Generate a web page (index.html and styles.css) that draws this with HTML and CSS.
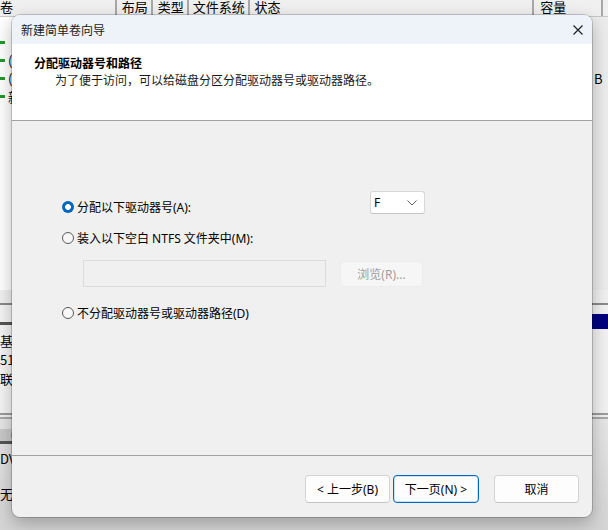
FILE: index.html
```html
<!DOCTYPE html>
<html>
<head>
<meta charset="utf-8">
<link rel="stylesheet" href="styles.css">
</head>
<body>
<div class="desk">
  <div class="hdr">
    <div class="hc c1"><span>卷</span></div>
    <div class="hc c2">布局</div>
    <div class="hc c3">类型</div>
    <div class="hc c4">文件系统</div>
    <div class="hc c5">状态</div>
    <div class="hc c6">容量</div>
    <div class="hc c7"></div>
  </div>
  <div class="list">
    <div class="lrow"><span class="gm"></span><span class="lt"></span><span class="rt"></span></div>
    <div class="lrow"><span class="gm"></span><span class="lt">(</span><span class="rt"></span></div>
    <div class="lrow"><span class="gm"></span><span class="lt">(</span><span class="rt">B</span></div>
    <div class="lrow"><span class="gm"></span><span class="lt">新</span><span class="rt"></span></div>
  </div>
  <div class="graph">
    <div class="disk d1">
      <div class="dleft">
        <div class="gbar"></div>
        <div class="dt">基本</div>
        <div class="dt">51</div>
        <div class="dt">联机</div>
      </div>
      <div class="dright"><div class="navy"></div></div>
    </div>
    <div class="disk d2">
      <div class="dleft">
        <div class="cdbar"><span class="cd"></span></div>
        <div class="gbar"></div>
        <div class="dt">DVD</div>
        <div class="dt low">无媒体</div>
      </div>
      <div class="dright"></div>
    </div>
  </div>
</div>

<div class="dialog">
  <div class="titlebar">
    <span class="ttl">新建简单卷向导</span>
    <svg class="close" width="10" height="10" viewBox="0 0 10 10"><path d="M0.5 0.5L9.5 9.5M9.5 0.5L0.5 9.5" stroke="#1a1a1a" stroke-width="1.1" fill="none"/></svg>
  </div>
  <div class="header">
    <div class="h1">分配驱动器号和路径</div>
    <div class="h2">为了便于访问，可以给磁盘分区分配驱动器号或驱动器路径。</div>
  </div>
  <div class="body">
    <div class="row r1">
      <label class="opt w308"><span class="radio on"></span><span>分配以下驱动器号(A):</span></label>
      <div class="select"><span>F</span>
        <svg width="10" height="6" viewBox="0 0 10 6"><path d="M0.5 0.5L5 5L9.5 0.5" stroke="#606060" stroke-width="1" fill="none"/></svg>
      </div>
    </div>
    <div class="row r2">
      <label class="opt"><span class="radio"></span><span>装入以下空白 NTFS 文件夹中(M):</span></label>
    </div>
    <div class="row r3">
      <div class="input"></div>
      <div class="btn dis">浏览(R)...</div>
    </div>
    <div class="row r4">
      <label class="opt"><span class="radio"></span><span>不分配驱动器号或驱动器路径(D)</span></label>
    </div>
  </div>
  <div class="footer">
    <div class="btn b1">&lt; 上一步(B)</div>
    <div class="btn b2 def">下一页(N) &gt;</div>
    <div class="btn b3">取消</div>
  </div>
</div>
</body>
</html>
```

FILE: styles.css
```css
* { box-sizing: border-box; }
html, body { margin: 0; padding: 0; }
body {
  width: 608px;
  height: 530px;
  overflow: hidden;
  position: relative;
  font-family: "Noto Sans", "Noto Sans CJK SC", sans-serif;
  font-size: 12px;
  color: #000;
  background: #f0f0f0;
}

/* background window */
.desk {
  width: 608px;
  height: 530px;
  display: flex;
  flex-direction: column;
  background: #fff;
}
.hdr {
  height: 17px;
  display: flex;
  background: #f0f0f0;
  border-bottom: 1px solid #c8c8c8;
  font-family: "Noto Sans CJK SC", sans-serif;
  font-size: 13px;
  line-height: 14px;
}
.hc { border-right: 2px solid #a8a8a8; padding-left: 5px; white-space: nowrap; }
.c1 { width: 117px; padding-left: 0; }
.c2 { width: 36px; }
.c3 { width: 36px; }
.c4 { width: 61px; padding-left: 4px; }
.c5 { width: 285px; }
.c6 { width: 69px; padding-left: 6px; }
.c7 { flex: 1; border-right: none; }

.list {
  height: 273px;
  padding-top: 17px;
  display: flex;
  flex-direction: column;
  gap: 1px;
  background: linear-gradient(90deg, #fff 0 560px, #ececec 560px);
}
.lrow { height: 17px; display: flex; align-items: center; font-family: "Noto Sans CJK SC", sans-serif; font-size: 13px; }
.gm { width: 5px; height: 3px; background: #1f9a2a; margin-right: 3px; }
.lt { width: 20px; }
.rt { margin-left: auto; width: 14px; }

.graph {
  flex: 1;
  background: #f0f0f0;
  padding-top: 13px;
  display: flex;
  flex-direction: column;
}
.disk { display: flex; justify-content: space-between; }
.d1 { height: 112px; border-top: 2px solid #8a8a8a; border-bottom: 2px solid #9a9a9a; }
.d2 { flex: 1; margin-top: 2px; border-top: 2px solid #a8a8a8; padding-top: 10px; background: linear-gradient(180deg, #e6e6e6, #d4d4d4); }
.dleft { width: 40px; display: flex; flex-direction: column; font-family: "Noto Sans CJK SC", sans-serif; font-size: 13px; line-height: 19px; background: #f4f4f4; }
.d2 .dleft { background: transparent; }
.d1 .gbar { margin-top: 17px; height: 3px; background: linear-gradient(90deg, #555 0 24px, #1f9a2a 24px); margin-bottom: 6px; }
.dt { white-space: nowrap; overflow: hidden; }
.cdbar { height: 12px; background: #c8c8c8; display: flex; align-items: center; padding-left: 9px; }
.cd { width: 12px; height: 12px; border-radius: 50%; background: radial-gradient(circle, #eee 0 2px, #999 3px, #ddd 6px); }
.d2 .gbar { height: 3px; background: linear-gradient(90deg, #555 0 24px, #1f9a2a 24px); margin-bottom: 5px; }
.low { margin-top: 16px; }
.dright { width: 40px; padding-top: 9px; background: #f2f2f2; }
.d2 .dright { background: transparent; }
.navy { height: 15px; background: #000080; margin-left: 16px; }

/* dialog */
.dialog {
  position: absolute;
  left: 12px;
  top: 15px;
  width: 580px;
  height: 502px;
  border-radius: 8px;
  overflow: hidden;
  background: #f0f0f0;
  display: flex;
  flex-direction: column;
  box-shadow: 0 0 0 1px rgba(0,0,0,0.18), 0 6px 18px rgba(0,0,0,0.28);
  font-family: "Noto Sans", "Noto Sans CJK SC", sans-serif;
  font-size: 12px;
}
.titlebar {
  height: 29px;
  flex: none;
  background: #eef3fa;
  display: flex;
  align-items: center;
  justify-content: space-between;
  padding: 0 9px 0 9px;
}
.ttl { font-family: "Noto Sans CJK SC", sans-serif; font-size: 12px; color: #1a1a1a; }
.close { display: block; }

.header {
  height: 77px;
  flex: none;
  background: #fff;
  border-bottom: 1px solid #a0a0a0;
  padding: 11px 0 0 22px;
}
.h1 { font-family: "Noto Sans CJK SC", sans-serif; font-weight: bold; font-size: 12px; line-height: 16px; }
.h2 { font-family: "Noto Sans CJK SC", sans-serif; font-size: 12px; line-height: 16px; margin-top: 1px; padding-left: 21px; color: #1a1a1a; }

.body {
  flex: 1;
  padding: 70px 0 0 50px;
  display: flex;
  flex-direction: column;
}
.row { display: flex; }
.r1 { height: 28px; }
.r2 { height: 20px; margin-top: 9px; align-items: center; }
.r3 { height: 27px; margin-top: 12px; padding-left: 21px; align-items: flex-start; }
.r4 { height: 20px; margin-top: 16px; align-items: center; }

.opt { display: flex; align-items: center; height: 20px; white-space: nowrap; }
.r1 .opt { align-self: flex-end; height: 24px; }
.w308 { width: 308px; }
.radio {
  width: 12px;
  height: 12px;
  border-radius: 50%;
  border: 1px solid #5a5a5a;
  background: #f7f7f7;
  margin-right: 3px;
  flex: none;
}
.radio.on {
  border: none;
  background: radial-gradient(circle, #fff 0 2.6px, #0067c0 3.2px);
}

.select {
  width: 55px;
  height: 23px;
  background: #fff;
  border: 1px solid #d8d8d8;
  border-bottom-color: #c4c4c4;
  border-radius: 3px;
  display: flex;
  align-items: center;
  justify-content: space-between;
  padding: 0 7px 0 3px;
}
.select span { font-size: 12px; }
.select svg { display: block; }

.input {
  width: 243px;
  height: 27px;
  background: #f0f0f0;
  border: 1px solid #dcdcdc;
}
.btn {
  height: 28px;
  border-radius: 4px;
  background: #fdfdfd;
  border: 1px solid #d4d4d4;
  border-bottom-color: #c4c4c4;
  display: flex;
  align-items: center;
  justify-content: center;
  font-size: 12px;
  white-space: nowrap;
}
.btn.dis {
  width: 83px;
  height: 26px;
  margin-left: 14px;
  margin-top: 1px;
  background: #f6f6f6;
  border-color: #ececec;
  color: #a0a0a0;
}

.footer {
  height: 62px;
  flex: none;
  border-top: 1px solid #a0a0a0;
  display: flex;
  justify-content: flex-end;
  align-items: flex-start;
  padding: 19px 13px 0 0;
}
.b1 { width: 85px; }
.b2 { width: 86px; margin-left: 3px; }
.b3 { width: 85px; margin-left: 15px; }
.btn.def { border: 1px solid #0067c0; box-shadow: inset 0 0 0 1px #cfe3f6; }
```
